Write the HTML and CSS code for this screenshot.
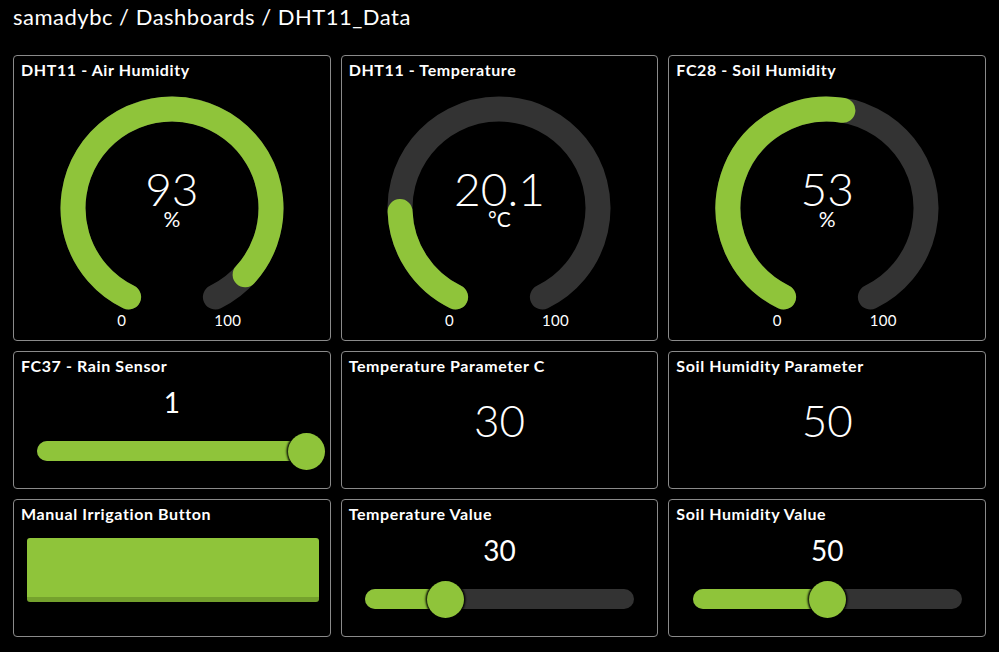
FILE: index.html
```html
<!DOCTYPE html>
<html>
<head>
<meta charset="utf-8">
<link rel="stylesheet" href="styles.css">
</head>
<body>
<div class="crumbs">samadybc / Dashboards / DHT11_Data</div>
<div class="grid">
  <div class="card">
    <div class="title">DHT11 - Air Humidity</div>
    <div class="gauge">
      <svg width="236" height="236" viewBox="0 0 236 236">
        <path class="track" d="M74.6 207 A99 99 0 1 1 161.4 207"/>
        <path class="fill" d="M74.6 207 A99 99 0 1 1 191.1 184.8"/>
      </svg>
      <div class="g-read"><span class="g-val">93</span><span class="g-unit">%</span></div>
      <div class="g-min">0</div>
      <div class="g-max">100</div>
    </div>
  </div>
  <div class="card">
    <div class="title">DHT11 - Temperature</div>
    <div class="gauge">
      <svg width="236" height="236" viewBox="0 0 236 236">
        <path class="track" d="M74.6 207 A99 99 0 1 1 161.4 207"/>
        <path class="fill" d="M74.6 207 A99 99 0 0 1 19.07 121.6"/>
      </svg>
      <div class="g-read"><span class="g-val">20.1</span><span class="g-unit">°C</span></div>
      <div class="g-min">0</div>
      <div class="g-max">100</div>
    </div>
  </div>
  <div class="card">
    <div class="title">FC28 - Soil Humidity</div>
    <div class="gauge">
      <svg width="236" height="236" viewBox="0 0 236 236">
        <path class="track" d="M74.6 207 A99 99 0 1 1 161.4 207"/>
        <path class="fill" d="M74.6 207 A99 99 0 0 1 133.9 20.3"/>
      </svg>
      <div class="g-read"><span class="g-val">53</span><span class="g-unit">%</span></div>
      <div class="g-min">0</div>
      <div class="g-max">100</div>
    </div>
  </div>

  <div class="card">
    <div class="title">FC37 - Rain Sensor</div>
    <div class="s-val">1</div>
    <div class="slider">
      <div class="s-fill" style="width:100%"></div>
      <div class="s-thumb" style="left:100%"></div>
    </div>
  </div>
  <div class="card">
    <div class="title">Temperature Parameter C</div>
    <div class="n-val">30</div>
  </div>
  <div class="card">
    <div class="title">Soil Humidity Parameter</div>
    <div class="n-val">50</div>
  </div>

  <div class="card">
    <div class="title">Manual Irrigation Button</div>
    <div class="btn"></div>
  </div>
  <div class="card">
    <div class="title">Temperature Value</div>
    <div class="s-val">30</div>
    <div class="slider">
      <div class="s-fill" style="width:30%"></div>
      <div class="s-thumb" style="left:30%"></div>
    </div>
  </div>
  <div class="card">
    <div class="title">Soil Humidity Value</div>
    <div class="s-val">50</div>
    <div class="slider">
      <div class="s-fill" style="width:50%"></div>
      <div class="s-thumb" style="left:50%"></div>
    </div>
  </div>
</div>
</body>
</html>
```
FILE: styles.css
```css
html, body {
  margin: 0;
  background: #000;
  color: #fff;
  font-family: Lato, "Open Sans", "DejaVu Sans", sans-serif;
}
.crumbs {
  padding: 3px 13px 0;
  font-size: 22px;
  letter-spacing: 0.5px;
  line-height: 27px;
  height: 27px;
}
.grid {
  margin-top: 25px;
  padding: 0 13px;
  display: grid;
  grid-template-columns: repeat(3, 1fr);
  grid-template-rows: 286px 138px 138px;
  gap: 10px;
}
.card {
  border: 1px solid #8a8a8a;
  border-radius: 4px;
  padding: 5px 7px 0;
  display: flex;
  flex-direction: column;
  align-items: center;
  box-sizing: border-box;
}
.title {
  align-self: stretch;
  font-weight: 700;
  font-size: 16px;
  letter-spacing: 0.6px;
  line-height: 18px;
  height: 18px;
}
.gauge {
  position: relative;
  width: 236px;
  height: 240px;
  margin-top: 11px;
}
.gauge svg { display: block; }
.track, .fill {
  fill: none;
  stroke-width: 25;
  stroke-linecap: round;
}
.track { stroke: #333333; }
.fill { stroke: #8fc43a; }
.g-read {
  position: absolute;
  left: 0; right: 0;
  top: 79px;
  display: flex;
  flex-direction: column;
  align-items: center;
}
.g-val {
  font-size: 46px;
  line-height: 39px;
  font-weight: 300;
}
.g-unit {
  margin-top: 1px;
  font-size: 21px;
  line-height: 20px;
  font-weight: 400;
}
.g-min, .g-max {
  position: absolute;
  top: 222px;
  width: 40px;
  text-align: center;
  font-size: 15px;
  letter-spacing: 0.3px;
  line-height: 17px;
}
.g-min { left: 48px; }
.g-max { left: 154px; }
.s-val {
  margin-top: 13px;
  font-size: 28px;
  line-height: 28px;
  font-weight: 400;
}
.slider {
  position: relative;
  margin-top: 25px;
  width: 269px;
  height: 20px;
  border-radius: 10px;
  background: #333333;
}
.s-fill {
  height: 100%;
  border-radius: 10px;
  background: #8fc43a;
}
.s-thumb {
  position: absolute;
  top: 50%;
  width: 37px;
  height: 37px;
  margin: -18.5px 0 0 -18.5px;
  border-radius: 50%;
  background: #8fc43a;
  box-shadow: 0 0 2px 1.5px rgba(0,0,0,0.9);
}
.n-val {
  margin-top: 23px;
  font-size: 44px;
  line-height: 44px;
  font-weight: 300;
}
.btn {
  margin: 15px 0 0 3px;
  width: 292px;
  height: 64px;
  box-sizing: border-box;
  background: #8fc43a;
  border-bottom: 5px solid #75a22d;
  border-radius: 3px;
}
```
